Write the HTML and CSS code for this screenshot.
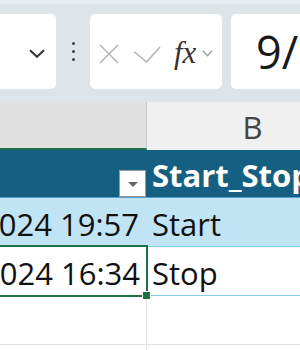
FILE: index.html
```html
<!DOCTYPE html>
<html>
<head>
<meta charset="utf-8">
<link rel="stylesheet" href="styles.css">
</head>
<body>
<div class="app">
  <div class="toolbar">
    <div class="namebox">
      <svg class="nb-chev" width="16" height="9" viewBox="0 0 16 9"><path d="M1 1.2 L8 7.8 L15 1.2" fill="none" stroke="#333" stroke-width="2"/></svg>
    </div>
    <div class="dots"><span></span><span></span><span></span></div>
    <div class="fnbox">
      <svg class="ic-x" width="20" height="20" viewBox="0 0 20 20"><path d="M1 1 L19 19 M19 1 L1 19" fill="none" stroke="#b5b5b5" stroke-width="1.6"/></svg>
      <svg class="ic-check" width="28" height="17" viewBox="0 0 28 17"><path d="M1 5.5 L13.5 16 L27 1" fill="none" stroke="#b5b5b5" stroke-width="1.6"/></svg>
      <span class="fx">fx</span>
      <svg class="fx-chev" width="11" height="7" viewBox="0 0 11 7"><path d="M0.8 0.8 L5.5 5.8 L10.2 0.8" fill="none" stroke="#a0a0a0" stroke-width="1.4"/></svg>
    </div>
    <div class="formula">9/</div>
  </div>
  <div class="grid">
    <div class="row colhead">
      <div class="cell a"></div>
      <div class="cell b">B</div>
    </div>
    <div class="row thead">
      <div class="cell a"><span class="filter"><span class="tri"></span></span></div>
      <div class="cell b">Start_Stop</div>
    </div>
    <div class="row r1">
      <div class="cell a"><span class="val">9/12/2024 19:57</span></div>
      <div class="cell b">Start</div>
    </div>
    <div class="row r2">
      <div class="cell a active"><div class="clip"><span class="val">9/13/2024 16:34</span></div></div>
      <div class="cell b">Stop</div>
    </div>
    <div class="row r3">
      <div class="cell a"></div>
      <div class="cell b"></div>
    </div>
    <div class="row r4">
      <div class="cell a"></div>
      <div class="cell b"></div>
    </div>
  </div>
</div>
</body>
</html>
```

FILE: styles.css
```css
html, body {
  margin: 0;
  padding: 0;
}
body {
  width: 300px;
  height: 350px;
  overflow: hidden;
  background: #ffffff;
  font-family: "Open Sans", "Noto Sans", sans-serif;
}
.app {
  width: 300px;
  height: 350px;
  overflow: hidden;
}
.toolbar {
  display: flex;
  align-items: stretch;
  height: 75px;
  padding: 10px 0 13px 0;
  border-top: 4px solid #e9ecef;
  background: #dfe4e8;
}
.namebox {
  flex: 0 0 62px;
  margin-left: -6px;
  background: #fff;
  border-radius: 5px;
  display: flex;
  justify-content: flex-end;
  align-items: center;
  padding-right: 11px;
  box-sizing: border-box;
}
.nb-chev {
  margin-top: 4px;
}
.dots {
  flex: 0 0 34px;
  display: flex;
  flex-direction: column;
  align-items: center;
  justify-content: center;
  gap: 4.5px;
  padding-left: 1px;
  box-sizing: border-box;
}
.dots span {
  width: 3.5px;
  height: 3.5px;
  border-radius: 50%;
  background: #444;
}
.fnbox {
  flex: 0 0 132px;
  background: #fff;
  border-radius: 5px;
  display: flex;
  align-items: center;
  padding-left: 9px;
  box-sizing: border-box;
}
.ic-x {
  margin-top: 4px;
}
.ic-check {
  margin-left: 14px;
  margin-top: 6px;
}
.fx {
  margin-left: 13px;
  font-family: "Liberation Serif", "DejaVu Serif", serif;
  font-style: italic;
  font-size: 31px;
  color: #333;
  line-height: 1;
  margin-top: 2px;
}
.fx-chev {
  margin-left: 6px;
  margin-top: 3px;
}
.formula {
  flex: 0 0 120px;
  margin-left: 9px;
  background: #fff;
  border-radius: 5px 0 0 5px;
  padding-left: 25px;
  font-size: 45px;
  line-height: 75px;
  color: #1a1a1a;
  box-sizing: border-box;
  overflow: hidden;
}
.grid {
  display: flex;
  flex-direction: column;
}
.row {
  display: flex;
  height: 49px;
  box-sizing: border-box;
}
.cell {
  box-sizing: border-box;
  height: 100%;
  min-width: 0;
  display: flex;
  align-items: center;
  font-size: 31px;
  white-space: nowrap;
  overflow: hidden;
}
.val {
  flex: 0 0 auto;
}
.cell.a {
  flex: 0 0 147px;
  justify-content: flex-end;
  padding-right: 7px;
  border-right: 1px solid #e1e1e1;
}
.cell.b {
  flex: 0 0 211px;
  padding-left: 5px;
  color: #111;
}
.colhead {
  height: 48px;
}
.colhead .cell.a {
  background: #e1e1e1;
  border-bottom: 2px solid #1e7145;
  border-right: 1px solid #c4c4c4;
}
.colhead .cell.b {
  background: #f0f0f0;
  justify-content: center;
  padding-left: 0;
  color: #444;
  padding-top: 1px;
}
.thead {
  height: 48px;
  background: #156082;
  border-bottom: 1px solid #4f9fd0;
}
.thead .cell.a {
  border-right: none;
  padding-right: 0;
  align-items: flex-end;
}
.thead .cell.b {
  color: #fff;
  font-weight: bold;
  padding-top: 3px;
}
.filter {
  width: 27px;
  height: 27px;
  box-sizing: border-box;
  background: #fff;
  border: 1px solid #9a9a9a;
  display: flex;
  align-items: center;
  justify-content: center;
  margin-right: 1px;
}
.tri {
  width: 0;
  height: 0;
  border-left: 5px solid transparent;
  border-right: 5px solid transparent;
  border-top: 5px solid #666;
  margin-top: 1px;
}
.r1 {
  background: #c1e4f5;
  border-bottom: 1px solid #83c9ea;
}
.r1 .cell, .r2 .cell {
  padding-top: 3px;
  color: #111;
}
.r1 .cell.a {
  border-right: 1px solid #c1e4f5;
}
.r2 {
  border-bottom: 1px solid #83c9ea;
}
.r2 .cell.a {
  position: relative;
  overflow: visible;
  border-right: none;
  padding-right: 0;
}
.clip {
  width: 100%;
  height: 100%;
  display: flex;
  align-items: center;
  justify-content: flex-end;
  overflow: hidden;
  padding-right: 7px;
  box-sizing: border-box;
}
.active::after {
  content: "";
  position: absolute;
  left: -4px;
  right: -1px;
  top: -2px;
  bottom: -2px;
  border: 2px solid #1e7145;
}
.active::before {
  content: "";
  position: absolute;
  right: -3px;
  bottom: -4px;
  width: 7px;
  height: 7px;
  background: #1e7145;
  border: 1px solid #fff;
  box-sizing: content-box;
  margin: -1px;
  z-index: 2;
}
.r3 {
  border-bottom: 1px solid #e1e1e1;
}
.r4 {
  height: 10px;
}
```
